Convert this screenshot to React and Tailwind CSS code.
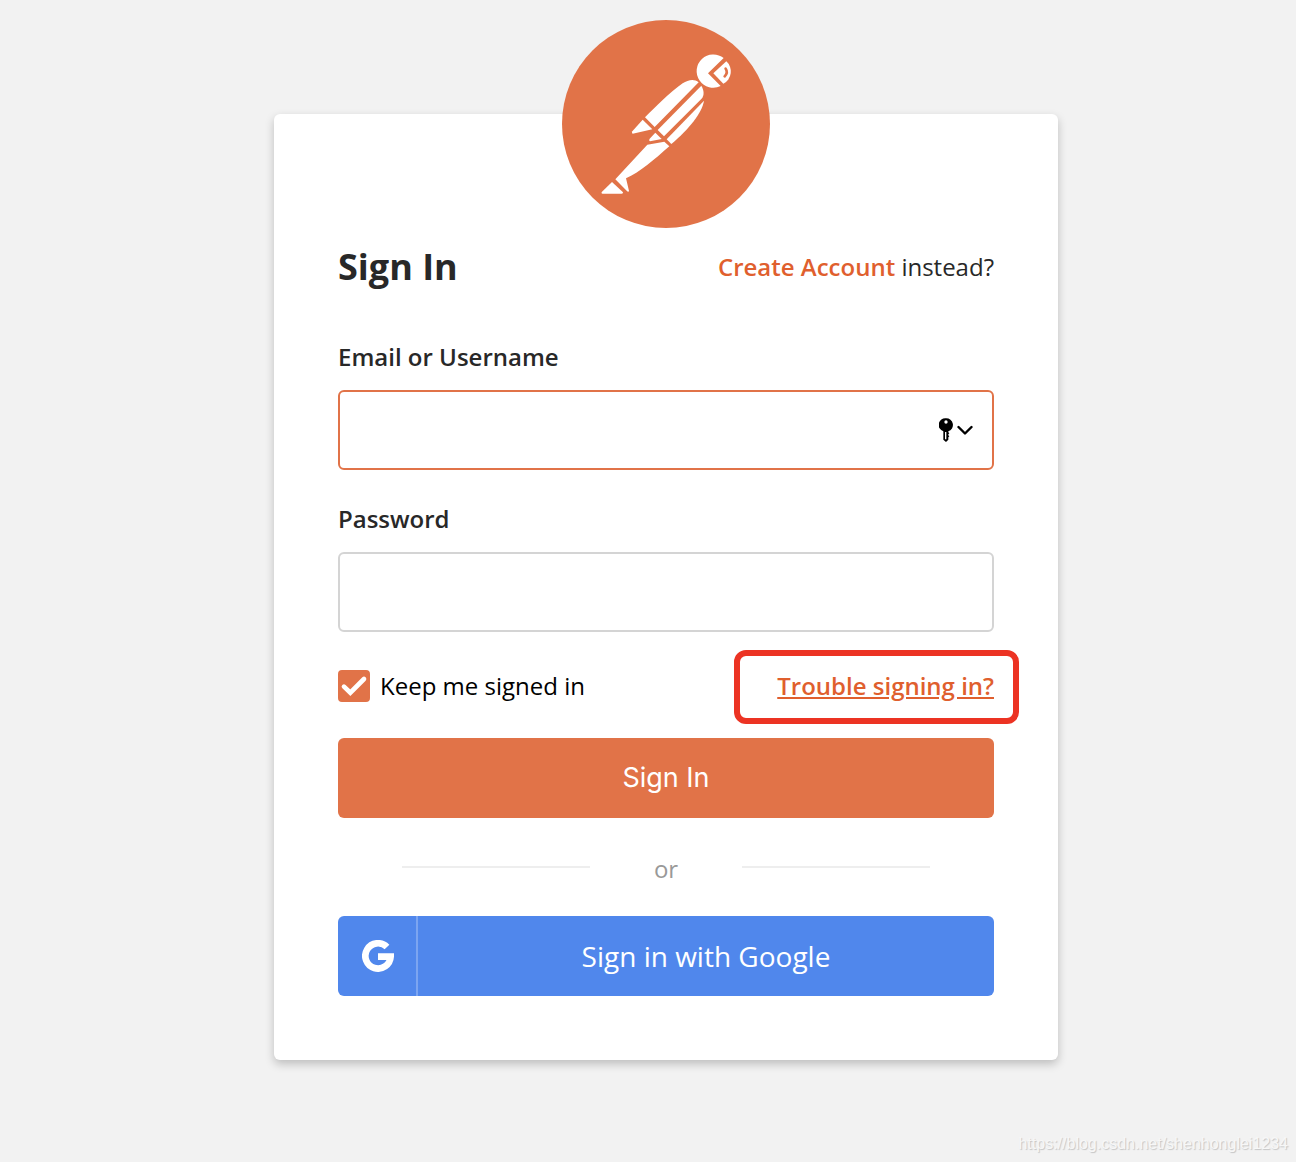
import React, { useState } from 'react';

function PostmanLogo() {
  return (
    <svg viewBox="18 18 624 624" className="block w-52 h-52" role="img" aria-label="Postman">
      <circle cx="330" cy="330" r="312" fill="#e17348" />
      <g fill="#fff">
        {/* head */}
        <path d="M503 132 L456 178 L494 216 A50 50 0 1 1 503 132 Z" />
        <path d="M511 142 L472 178 L502 209 A41 41 0 0 0 511 142 Z" />
        {/* body */}
        <path d="M428 205 C414 193 396 198 380 208 C340 236 300 278 267 310 L296 339 Z" />
        <path d="M436 215 L305 348 L324 367 L436 255 C446 244 444 228 436 215 Z" />
        <path d="M444 260 L332 376 L346 390 C400 344 438 296 444 260 Z" />
        {/* arm and hand */}
        <path d="M260 317 L289 346 L230 359 Q226 357 229 352 Z" />
        <path d="M298 356 L317 375 L282 382 Q277 379 281 374 Z" />
        {/* leg and foot */}
        <path d="M274 392 L325 383 L340 397 C296 436 250 476 210 493 L219 531 Q217 536 212 530 L178 496 Z" />
        <path d="M168 504 L201 535 Q202 539 197 539 H140 Q134 538 138 533 Z" />
      </g>
      <path d="M509 164 Q517 175 506 187" fill="none" stroke="#e17348" strokeWidth="8" strokeLinecap="round" />
    </svg>
  );
}

function KeyIcon() {
  return (
    <svg viewBox="0 0 42 72" className="w-3.5 h-6" aria-hidden="true">
      <path
        fillRule="evenodd"
        d="M21 1 A20 20 0 0 1 28 40 V43 L31 46 L28 49 V52 L31 55 L28 58 V65 L21 72 L13 65 V40 A20 20 0 0 1 21 1 Z M21 7 A5 5 0 1 0 21 17 A5 5 0 1 0 21 7 Z M18 42 V64 H22 V42 Z"
      />
    </svg>
  );
}

function ChevronIcon() {
  return (
    <svg viewBox="0 0 16 10" className="w-4 h-2.5" aria-hidden="true">
      <path d="M1.5 2 L8 8.5 L14.5 2" fill="none" stroke="#000" strokeWidth="2.4" strokeLinecap="round" strokeLinejoin="round" />
    </svg>
  );
}

function GoogleIcon() {
  return (
    <svg viewBox="0 0 96 96" className="w-8 h-8" aria-hidden="true">
      <path d="M75 21 A38 38 0 1 0 86 50 H48" fill="none" stroke="#fff" strokeWidth="20" />
    </svg>
  );
}

export default function App() {
  const [email, setEmail] = useState('');
  const [password, setPassword] = useState('');
  const [keepSignedIn, setKeepSignedIn] = useState(true);

  return (
    <div className="flex flex-col items-center min-h-screen bg-[#f2f2f2] text-[#282828] font-['Open_Sans','Noto_Sans',sans-serif]">
      <main className="w-full pl-9 pt-[114px]">
        <div className="w-full max-w-[784px] mx-auto px-16 pb-16 bg-white rounded-md shadow-[0_4px_10px_rgba(0,0,0,0.22)]">
          <div className="flex justify-center">
            <div className="-mt-[94px]">
              <PostmanLogo />
            </div>
          </div>

          <form onSubmit={(e) => e.preventDefault()}>
            <div className="flex items-center justify-between h-[78px]">
              <h1 className="text-4xl font-bold">Sign In</h1>
              <p className="text-2xl">
                <a href="#signup" className="font-semibold text-[#e05f2e]">Create Account</a> instead?
              </p>
            </div>

            <label htmlFor="email" className="block mt-[34px] text-2xl leading-[34px] font-semibold">Email or Username</label>
            <div className="relative mt-4">
              <input
                id="email"
                type="text"
                value={email}
                onChange={(e) => setEmail(e.target.value)}
                className="block w-full h-20 pl-5 pr-16 text-2xl bg-white border-2 border-[#e17348] rounded-md outline-none"
              />
              <button type="button" aria-label="Saved passwords" className="absolute inset-y-0 right-[21px] flex items-center gap-1">
                <KeyIcon />
                <ChevronIcon />
              </button>
            </div>

            <label htmlFor="password" className="block mt-8 text-2xl leading-[34px] font-semibold">Password</label>
            <input
              id="password"
              type="password"
              value={password}
              onChange={(e) => setPassword(e.target.value)}
              className="block w-full h-20 mt-4 px-5 text-2xl bg-white border-2 border-[#d4d4d4] rounded-md outline-none focus:border-[#e17348]"
            />

            <div className="flex items-center justify-between h-8 mt-[38px]">
              <label className="flex items-center gap-2.5 text-2xl text-black">
                <span className="grid">
                  <input
                    type="checkbox"
                    checked={keepSignedIn}
                    onChange={(e) => setKeepSignedIn(e.target.checked)}
                    className="peer col-start-1 row-start-1 appearance-none w-8 h-8 rounded-sm border-2 border-[#d4d4d4] checked:border-[#e17348] checked:bg-[#e17348]"
                  />
                  <svg viewBox="0 0 96 96" className="col-start-1 row-start-1 w-8 h-8 pointer-events-none opacity-0 peer-checked:opacity-100" aria-hidden="true">
                    <path d="M18 50 L37 68 L78 27" fill="none" stroke="#fff" strokeWidth="14" strokeLinecap="round" />
                  </svg>
                </span>
                Keep me signed in
              </label>
              <div className="relative">
                <a href="#trouble" className="text-2xl font-semibold text-[#e05f2e] underline">Trouble signing in?</a>
                <span className="absolute -left-[43px] -right-[25px] -top-5 -bottom-[22px] border-6 border-[#ec3323] rounded-xl pointer-events-none" />
              </div>
            </div>

            <button type="submit" className="block w-full h-20 mt-9 text-[27px] text-white bg-[#e17348] rounded-md font-['Inter',sans-serif]">
              Sign In
            </button>

            <div className="flex items-center justify-between h-[98px] px-16 text-2xl text-[#999]">
              <span className="w-47 h-0.5 bg-[#eee]" />
              <span className="pt-1">or</span>
              <span className="w-47 h-0.5 bg-[#eee]" />
            </div>

            <button type="button" className="flex items-center w-full h-20 text-[28px] text-white bg-[#5087ec] rounded-md">
              <span className="flex items-center justify-center w-20 h-20 pl-0.5 border-r-2 border-white/25">
                <GoogleIcon />
              </span>
              <span className="flex-1">Sign in with Google</span>
            </button>
          </form>
        </div>
      </main>

      <footer className="w-full mt-auto px-2 py-1.5 text-right text-base leading-6 text-[#f7f7f7] [text-shadow:1px_1px_1px_#c4c4c4] font-['Liberation_Sans',Arial,sans-serif]">
        https://blog.csdn.net/shenhonglei1234
      </footer>
    </div>
  );
}
